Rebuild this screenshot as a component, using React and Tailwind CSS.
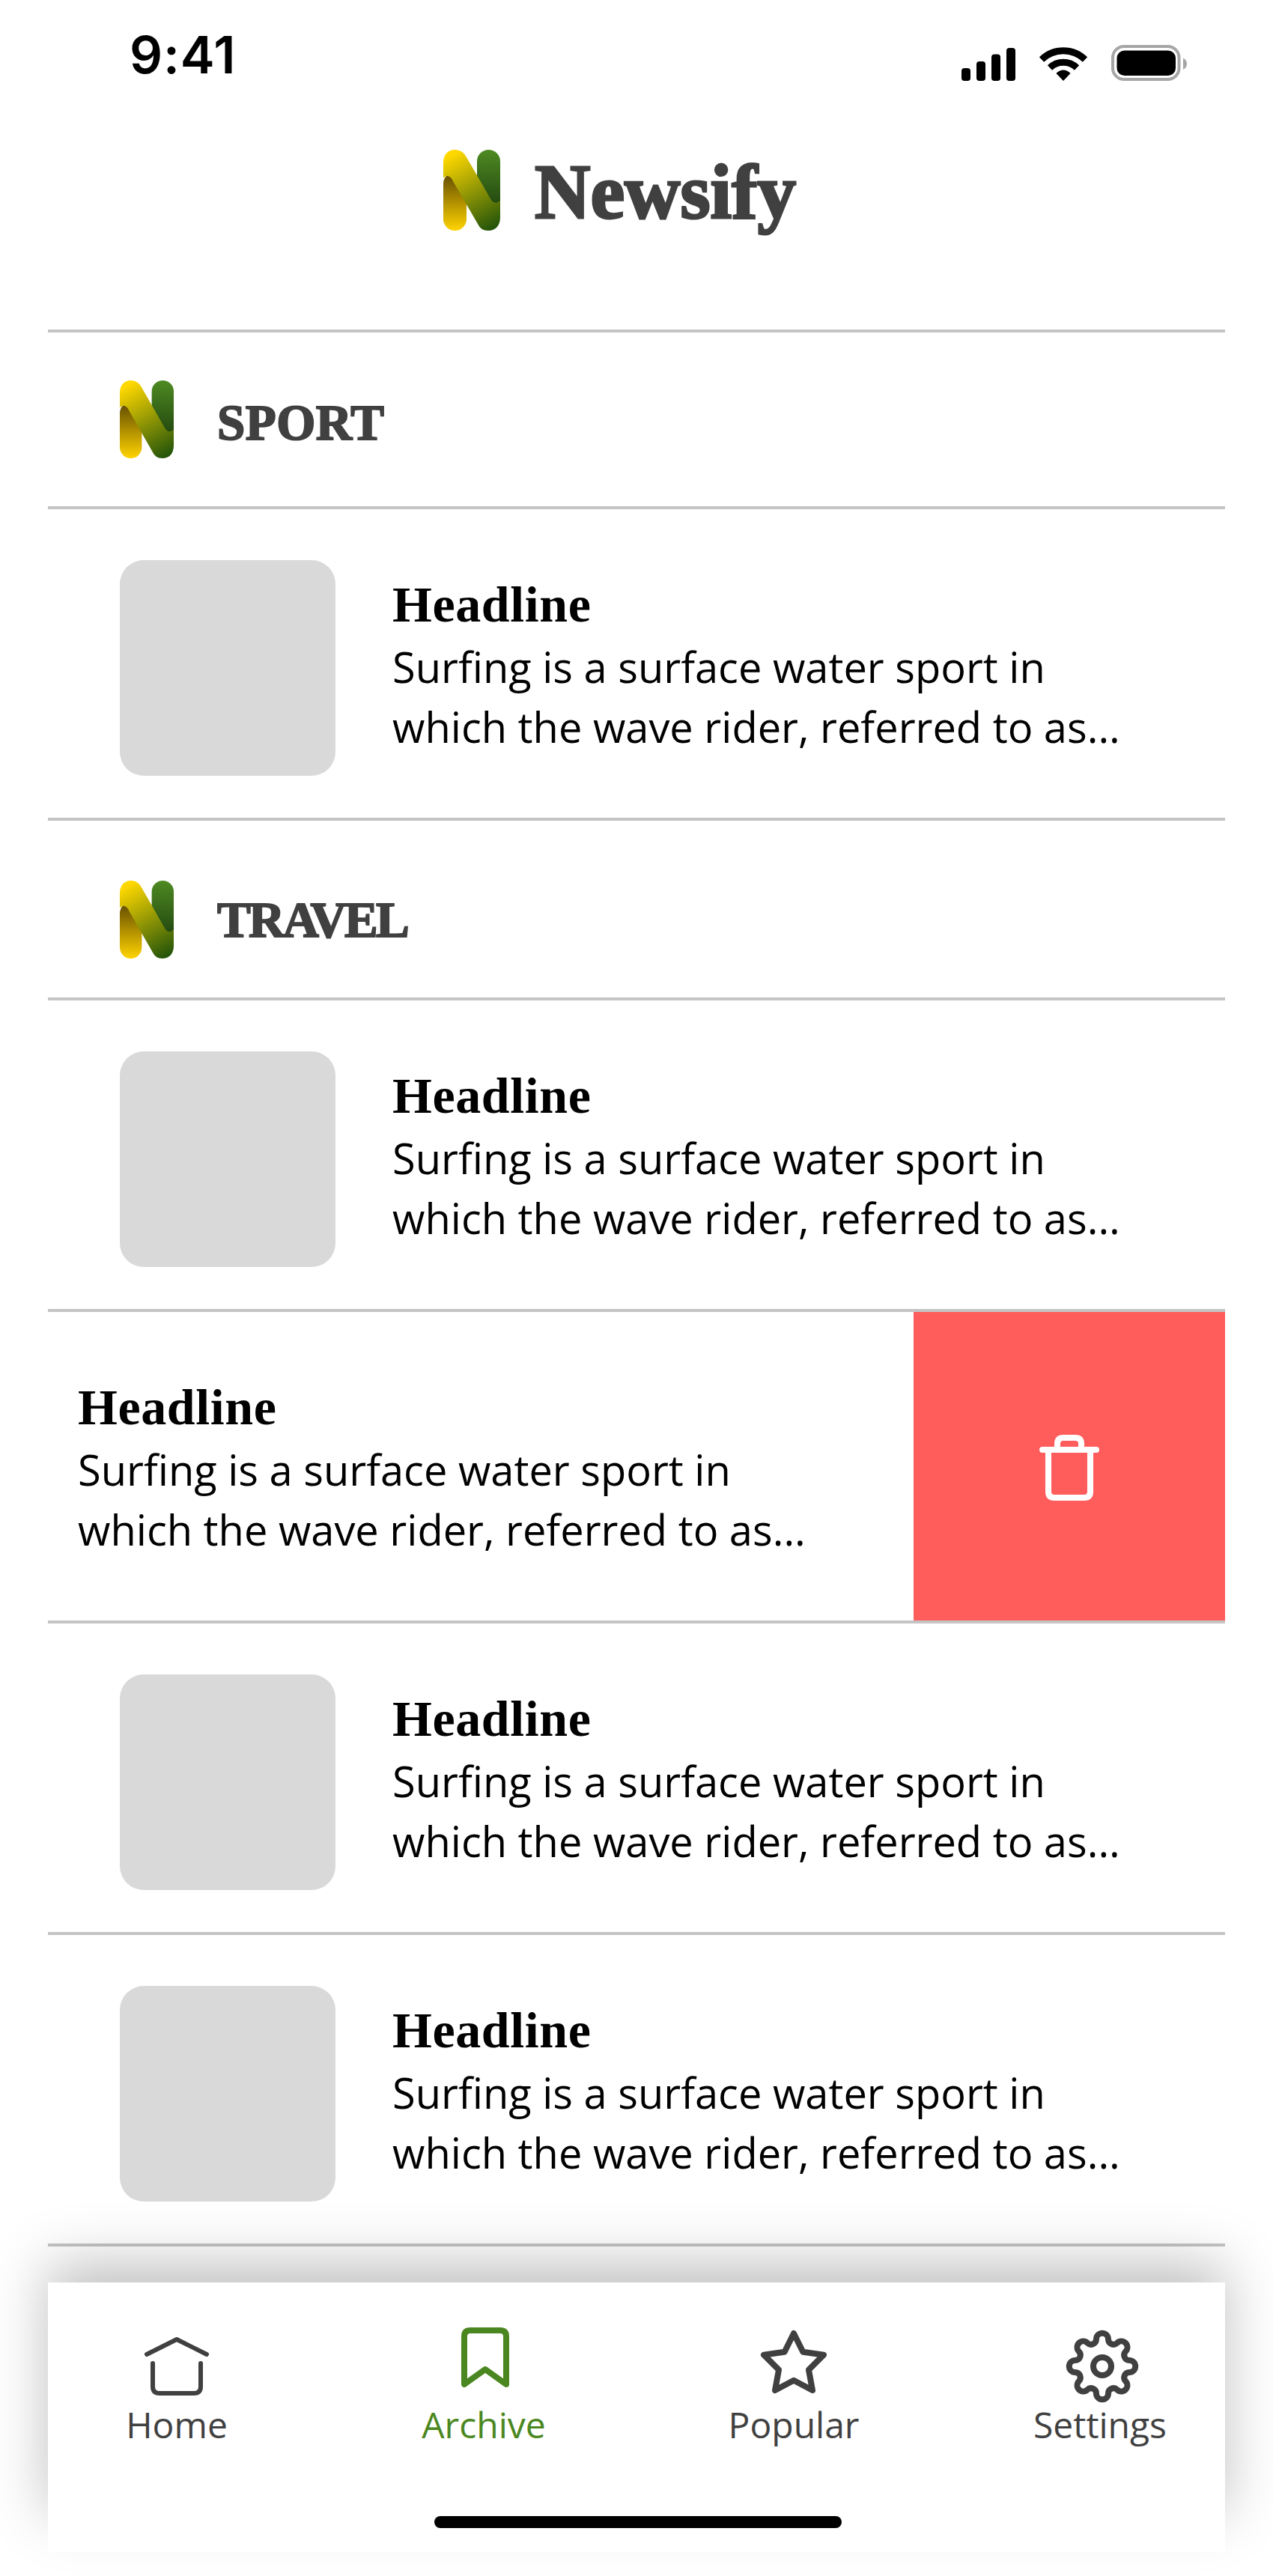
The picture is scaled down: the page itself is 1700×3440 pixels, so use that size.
const LOGO_DIAGONAL =
  'M0 38V17C0 7 6 0 15.500 0C22.500 0 27.500 3.500 31 10L64 67Q69 74 76 68V90C76 101 70 108 60 108C53 108 49 105 46 99L13 42Q10 35 5 35Q2 35 0 38Z';

function Logo({ className, id }) {
  return (
    <svg className={className} viewBox="0 0 76 108" preserveAspectRatio="none" aria-hidden="true">
      <defs>
        <linearGradient id={id + 'a'} gradientUnits="userSpaceOnUse" x1="0" y1="36" x2="0" y2="108">
          <stop stopColor="#6b5300" />
          <stop offset="1" stopColor="#ffd400" />
        </linearGradient>
        <linearGradient id={id + 'b'} gradientUnits="userSpaceOnUse" x1="0" y1="0" x2="0" y2="72">
          <stop stopColor="#4e8a22" />
          <stop offset="1" stopColor="#244a10" />
        </linearGradient>
        <linearGradient id={id + 'c'} gradientUnits="userSpaceOnUse" x1="11" y1="6" x2="66" y2="104">
          <stop stopColor="#ffd800" />
          <stop offset="1" stopColor="#26560a" />
        </linearGradient>
      </defs>
      <rect x="0" y="30" width="31" height="78" rx="15.500" fill={`url(#${id}a)`} />
      <rect x="45" y="0" width="31" height="84" rx="15.500" fill={`url(#${id}b)`} />
      <path d={LOGO_DIAGONAL} fill={`url(#${id}c)`} />
    </svg>
  );
}

function StatusBar() {
  return (
    <div className="flex h-[156px] items-start justify-between pr-[50px] pl-[109px]">
      <span className="mt-[32px] font-['Inter',sans-serif] text-[69px] leading-[82px] font-semibold tracking-[0.800px] text-black">9:41</span>
      <svg className="mt-[56px] h-[56px] w-[304px]" viewBox="1282 56 304 56" aria-hidden="true">
        <rect x="1284" y="91" width="12" height="17" rx="4" />
        <rect x="1304" y="82" width="12" height="26" rx="4" />
        <rect x="1324" y="72.500" width="12" height="35.500" rx="4" />
        <rect x="1344" y="64" width="12" height="44" rx="4" />
        <g fill="none" stroke="#000">
          <path d="M1391 79.500A41.500 41.500 0 0 1 1449 79.500" strokeWidth="9" />
          <path d="M1402 90.500A26 26 0 0 1 1438 90.500" strokeWidth="9" />
        </g>
        <path d="M1420 108L1410.500 98Q1414.500 93.500 1420 93.500T1429.500 98Z" />
        <rect x="1486" y="62" width="88.500" height="44" rx="15" fill="none" stroke="#a6a6a6" strokeWidth="4" />
        <rect x="1491.500" y="67.500" width="78.500" height="33.500" rx="10" />
        <path d="M1580 77.500Q1585 80 1585 85.300T1580 93Z" fill="#a6a6a6" />
      </svg>
    </div>
  );
}

function SectionHeader({ title, id, className, titleClass }) {
  return (
    <div className={'flex items-start border-b-4 border-[#c4c4c4] pl-24 ' + className}>
      <Logo id={id} className="h-[104px] w-[72px]" />
      <h2 className={"font-['Liberation_Serif',serif] leading-[76px] font-bold whitespace-nowrap text-[#404040] [-webkit-text-stroke:2px_#404040] " + titleClass}>
        {title}
      </h2>
    </div>
  );
}

function Summary({ className }) {
  return (
    <div className={'whitespace-nowrap text-black ' + className}>
      <h3 className="mb-[3px] font-['Liberation_Serif',serif] text-[68px] leading-[80px] font-bold tracking-[0.600px]">Headline</h3>
      <p className="font-['Open_Sans',sans-serif] text-[56px] leading-[80px]">
        Surfing is a surface water sport in
        <br />
        which the wave rider, referred to as...
      </p>
    </div>
  );
}

function Article() {
  return (
    <article className="flex h-[416px] items-start border-b-4 border-[#c4c4c4] pl-24">
      <div className="mt-[68px] size-72 shrink-0 rounded-[32px] bg-[#d9d9d9]" />
      <Summary className="mt-[87px] ml-[76px]" />
    </article>
  );
}

function SwipedArticle() {
  return (
    <article className="flex h-[416px] items-start justify-between border-b-4 border-[#c4c4c4] pl-10">
      <Summary className="mt-[87px]" />
      <button className="flex h-[412px] w-[416px] items-start justify-center bg-[#ff5c5c] pt-[164px]" aria-label="Delete">
        <svg className="h-[88px] w-20" viewBox="0 0 80 88" fill="none" stroke="#fff" strokeWidth="8" strokeLinecap="round">
          <path d="M4 20H76M12 20V76Q12 84 20 84H60Q68 84 68 76V20M24 20V12Q24 4 32 4H48Q56 4 56 12V20" />
        </svg>
      </button>
    </article>
  );
}

// Eight round teeth joined by round valleys.
function gearPath() {
  let d = '';
  for (let k = 0; k < 8; k++) {
    const t = (k * Math.PI) / 4;
    const c = Math.cos(t);
    const s = Math.sin(t);
    const at = (side) => `${(48 + 36.2 * c - side * 8 * s).toFixed(2)} ${(48 + 36.2 * s + side * 8 * c).toFixed(2)}`;
    d += (k === 0 ? 'M' : 'A7 7 0 0 0 ') + at(-1) + 'A8 8 0 0 1 ' + at(1);
  }
  return d + 'A7 7 0 0 0 84.20 40Z';
}

function NavItem({ label, color, labelClass = '', children }) {
  return (
    <a className={'flex w-[412px] flex-col items-center ' + color}>
      <svg className="h-24 w-24 overflow-visible" viewBox="0 0 96 96" fill="none" stroke="currentColor" strokeWidth="8" strokeLinecap="round" strokeLinejoin="round">
        {children}
      </svg>
      <span className={"mt-[-3px] font-['Open_Sans',sans-serif] text-[48px] leading-[66px] " + labelClass}>{label}</span>
    </a>
  );
}

function BottomNav() {
  return (
    <footer className="relative">
      <div className="absolute inset-x-0 top-0 h-[332px] shadow-[0_-24px_72px_rgba(0,0,0,0.25)]" />
      <div className="relative flex h-[360px] flex-col items-center bg-white">
        <nav className="ml-2 flex w-[1648px] shrink-0 pt-16">
          <NavItem label="Home" color="text-[#404040]">
            <path d="M8 32L48 12L88 32M16 44V75Q16 84 25 84H71Q80 84 80 75V44" strokeWidth="6" />
          </NavItem>
          <NavItem label="Archive" color="text-[#4b8720]" labelClass="mr-1">
            <path d="M20 72V8Q20 0 28 0H68Q76 0 76 8V72L48 52Z" />
          </NavItem>
          <NavItem label="Popular" color="text-[#404040]">
            <path d="M48 4L60.300 28.700L88 32.700L68 52.700L73 80L48 66.700L23 80L28 52.700L8 32.700L35.700 28.700Z" />
          </NavItem>
          <NavItem label="Settings" color="text-[#404040]" labelClass="mr-1.5">
            <path d={gearPath()} />
            <circle cx="48" cy="48" r="12" />
          </NavItem>
        </nav>
        <div className="mt-[89px] ml-1 h-4 w-[544px] shrink-0 rounded-full bg-black" />
      </div>
    </footer>
  );
}

export default function App() {
  return (
    <div className="h-[3440px] w-[1700px] overflow-hidden bg-white px-16">
      <StatusBar />
      <header className="flex h-[288px] items-start border-b-4 border-[#c4c4c4] pt-11 pl-[528px]">
        <Logo id="main" className="h-[108px] w-[76px]" />
        <h1 className="ml-[46px] mt-[-2px] font-['Liberation_Serif',serif] text-[103px] leading-[116px] font-bold text-[#404040] [-webkit-text-stroke:3px_#404040]">Newsify</h1>
      </header>
      <main>
        <SectionHeader id="sport" title="SPORT" className="h-[236px] pt-16" titleClass="ml-[58px] mt-[18px] text-[67px] tracking-[0.500px]" />
        <Article />
        <SectionHeader id="travel" title="TRAVEL" className="h-[240px] pt-20" titleClass="ml-[58px] mt-[14px] text-[67px] tracking-[-2.800px]" />
        <Article />
        <SwipedArticle />
        <Article />
        <Article />
      </main>
      <div className="h-12" />
      <BottomNav />
    </div>
  );
}
